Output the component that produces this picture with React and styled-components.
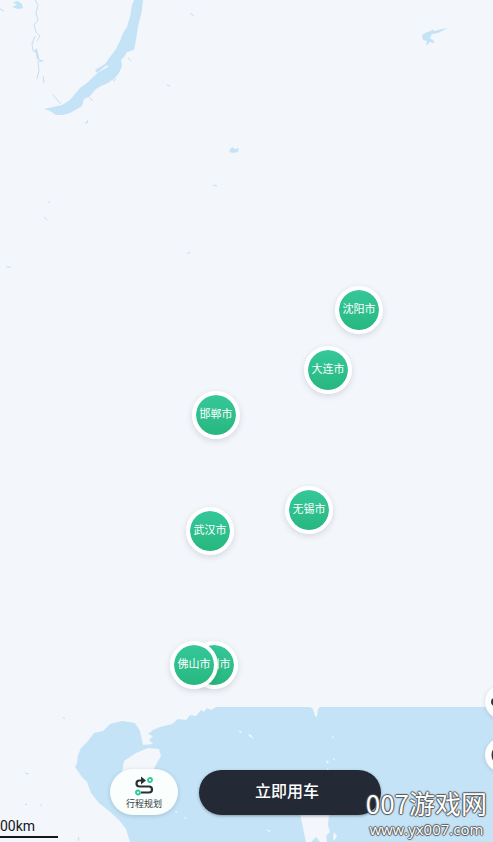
import React from 'react';
import styled, { createGlobalStyle } from 'styled-components';

const GlobalStyle = createGlobalStyle`
  * {
    box-sizing: border-box;
  }

  body {
    margin: 0;
    font-family: Roboto, "Noto Sans CJK SC", sans-serif;
    background: #f3f6fb;
  }

  button {
    border: 0;
    padding: 0;
    font: inherit;
    cursor: pointer;
  }
`;

const Screen = styled.main`
  position: relative;
  min-height: 100vh;
  overflow: hidden;
  display: flex;
  flex-direction: column;
  justify-content: flex-end;
`;

const MapDrawing = styled.svg`
  position: absolute;
  top: 0;
  left: 0;
  width: 100%;
  height: 100%;
`;

const Pin = styled.button`
  position: absolute;
  left: ${props => props.$x}px;
  top: ${props => props.$y}px;
  width: 48px;
  height: 48px;
  border: 4px solid #fff;
  border-radius: 50%;
  background: linear-gradient(#36c79a, #27b880) padding-box;
  box-shadow: 0 2px 6px rgba(40, 50, 60, 0.15);
  color: #fff;
  font-size: 11px;
  line-height: 16px;
  white-space: nowrap;
`;

const Tools = styled.div`
  position: absolute;
  right: -26px;
  bottom: 70px;
  display: flex;
  flex-direction: column;
  gap: 19px;
`;

const ToolButton = styled.button`
  display: flex;
  align-items: center;
  justify-content: center;
  width: 34px;
  height: 34px;
  border-radius: 50%;
  background: #fff;
  box-shadow: 0 1px 4px rgba(40, 50, 60, 0.15);
`;

const Actions = styled.div`
  position: relative;
  display: flex;
  align-items: center;
  gap: 21px;
  padding: 0 112px 1px 110px;
`;

const PlanButton = styled.button`
  display: flex;
  flex-direction: column;
  align-items: center;
  width: 68px;
  height: 46px;
  padding-top: 7px;
  border-radius: 23px;
  background: #fafefd;
  box-shadow: 0 1px 4px rgba(40, 60, 80, 0.2);
  color: #333a40;
  font-size: 9px;
  line-height: 16px;
`;

const RideButton = styled.button`
  flex: 1;
  height: 45px;
  padding: 0 6px 0 0;
  border-radius: 23px;
  background: #232a35;
  box-shadow: 0 1px 3px rgba(30, 40, 50, 0.4);
  color: #fff;
  font-size: 16px;
  font-weight: 500;
  line-height: 24px;
`;

const Footer = styled.footer`
  position: relative;
  height: 26px;
`;

const Scale = styled.div`
  width: 58px;
  height: 22px;
  border-bottom: 2px solid #14171c;
  color: #14171c;
  font-size: 14px;
  line-height: 20px;
`;

const Watermark = styled.div`
  position: absolute;
  right: 6px;
  bottom: 3px;
  display: flex;
  flex-direction: column;
  align-items: center;
  color: #fff;
  font-family: "Noto Sans CJK SC", sans-serif;
  text-shadow: 1px 0 1px #555, -1px 0 1px #555, 0 1px 1px #555, 0 -1px 1px #555;
  white-space: nowrap;
`;

const WatermarkName = styled.span`
  font-size: 26px;
  line-height: 32px;
`;

const WatermarkSite = styled.span`
  font-family: "Open Sans", sans-serif;
  font-size: 15px;
  line-height: 20px;
`;

const cities = [
  { name: '沈阳市', x: 335, y: 286 },
  { name: '大连市', x: 304, y: 346 },
  { name: '邯郸市', x: 192, y: 391 },
  { name: '无锡市', x: 285, y: 486 },
  { name: '武汉市', x: 186, y: 507 },
  { name: '深圳市', x: 190, y: 641 },
  { name: '佛山市', x: 170, y: 641 },
];

const WaterMap = () => (
  <MapDrawing viewBox="0 0 493 842" preserveAspectRatio="xMidYMid slice" aria-hidden="true">
    <rect width="493" height="842" fill="#f3f6fb" />
    <g fill="#c4e3f6">
      {/* lakes */}
      <path d="M134 0 L143 0 L142 9 L141 15 L138 26 L136 40 L134 50 L127 52 L124 57 L121 60 L122 66 L119 73 L115 78 L108 83 L101 86 L96 89 L90 96 L84 99 L82 106 L77 109 L70 113 L63 115 L56 115 L50 111 L44 109 L53 107 L62 105 L70 100 L75 94 L80 88 L87 83 L93 77 L99 72 L108 67 L107 65 L103 68 L97 73 L95 70 L105 64 L110 57 L116 49 L120 41 L123 33 L127 27 L130 17 L132 5 Z" />
      <path d="M13 2 L18 1 L22 4 L23 8 L18 9 L12 7 L17 5 Z" />
      <path d="M422 35 L427 32 L431 31 L432 29 L434 31 L438 30 L448 28 L438 33 L432 34 L430 38 L434 41 L434 43 L430 42 L426 46 L427 41 L423 40 Z" />
      <path d="M229 151 L232 147 L235 149 L239 148 L238 152 L232 153 Z" />
      {/* sea, from the gulf to the eastern edge */}
      <path d="M493 707 H320 L318 709 L317 717 L315 716 L313 709 L310 707 H216 L211 710 L207 708 L204 712 L201 710 L196 716 L190 715 L186 720 L178 719 L172 724 L160 727 L153 730 L148 734 L153 736 L149 740 L153 744 L143 745 L140 731 L135 723 L122 721 L110 724 L103 731 L94 733 L88 741 L81 748 L78 755 L77 763 L75 767 L82 777 L87 782 L91 793 L99 803 L109 811 L119 820 L126 829 L130 842 H493 Z" />
    </g>
    <g fill="#f3f6fb">
      <path d="M159 749 L148 748 L136 753 L124 761 L122 773 L125 784 L140 790 L151 784 L153 770 L161 756 Z" />
      <path d="M300 813 L329 814 L328 825 L330 832 L326 836 L327 842 H320 L316 837 L311 842 H306 L304 833 Z" />
      <path d="M239 730 l3 2 -2 1z M248 734 l3 1 3 4 -5 -3z M332 736 l2 1 -2 1z M326 760 l3 2 -2 2z M334 758 l1 2 -2 0z M327 768 l2 1 -2 1z M266 829 l5 2 -2 1z M334 832 l3 4 -3 5 -1 -4z M184 817 l3 1 -2 1z M175 811 l3 1 -2 1z" />
    </g>
    <g fill="none" stroke="#c5dff0" strokeWidth="1">
      <path d="M35 0 L38 5 L36 13 L38 20 L34 25 L36 32 L40 36 L37 41 M35 36 L32 44 L33 51 L37 52 L39 60 L43 61 L38 61 L39 70 L37 79 M43 76 L44 83 M0 9 L4 11" />
      <path d="M36 49 L38 59" strokeWidth="2" />
      <path d="M53 95 L61 104 M88 96 L93 101 M128 58 L131 61 M113 81 L116 79 M85 123 L87 123 L88 120 M190 13 L194 16 M167 85 L170 86 M213 185 L217 186 M187 254 L190 252 M48 202 L50 202 M44 217 L47 220 M6 267 L11 267 M63 717 L65 719 M25 773 L29 774 M25 804 L27 805 M40 805 L42 805 M78 841 L79 837" />
    </g>
  </MapDrawing>
);

const RouteIcon = () => (
  <svg width="20" height="20" viewBox="0 0 20 20" fill="none" aria-hidden="true">
    <path d="M9 4.5 H5.5 a3 3 0 0 0 0 6 H15 a3 3 0 0 1 0 6 H7" stroke="#292f35" strokeWidth="2.2" />
    <path d="M7 0.5 L12 4.5 L7 8.5 Z" fill="#292f35" />
    <circle cx="16" cy="4" r="2" stroke="#30c993" strokeWidth="1.8" />
    <circle cx="4" cy="16.5" r="2" stroke="#30c993" strokeWidth="1.8" />
  </svg>
);

const App = () => (
  <>
    <GlobalStyle />
    <Screen>
      <WaterMap />
      {cities.map(city => (
        <Pin key={city.name} type="button" $x={city.x} $y={city.y}>{city.name}</Pin>
      ))}
      <Tools>
        <ToolButton type="button" aria-label="More">
          <svg width="22" height="22" viewBox="0 0 22 22" fill="#30363c">
            <circle cx="4" cy="11" r="4" />
            <circle cx="11" cy="11" r="3" />
            <circle cx="18" cy="11" r="4" />
          </svg>
        </ToolButton>
        <ToolButton type="button" aria-label="Locate">
          <svg width="22" height="22" viewBox="0 0 22 22" fill="none" stroke="#30363c" strokeWidth="3">
            <circle cx="11" cy="11" r="9" />
            <circle cx="11" cy="11" r="2" />
          </svg>
        </ToolButton>
      </Tools>
      <Actions>
        <PlanButton type="button">
          <RouteIcon />
          行程规划
        </PlanButton>
        <RideButton type="button">立即用车</RideButton>
      </Actions>
      <Footer>
        <Scale>00km</Scale>
        <Watermark>
          <WatermarkName>007游戏网</WatermarkName>
          <WatermarkSite>www.yx007.com</WatermarkSite>
        </Watermark>
      </Footer>
    </Screen>
  </>
);

export default App;
